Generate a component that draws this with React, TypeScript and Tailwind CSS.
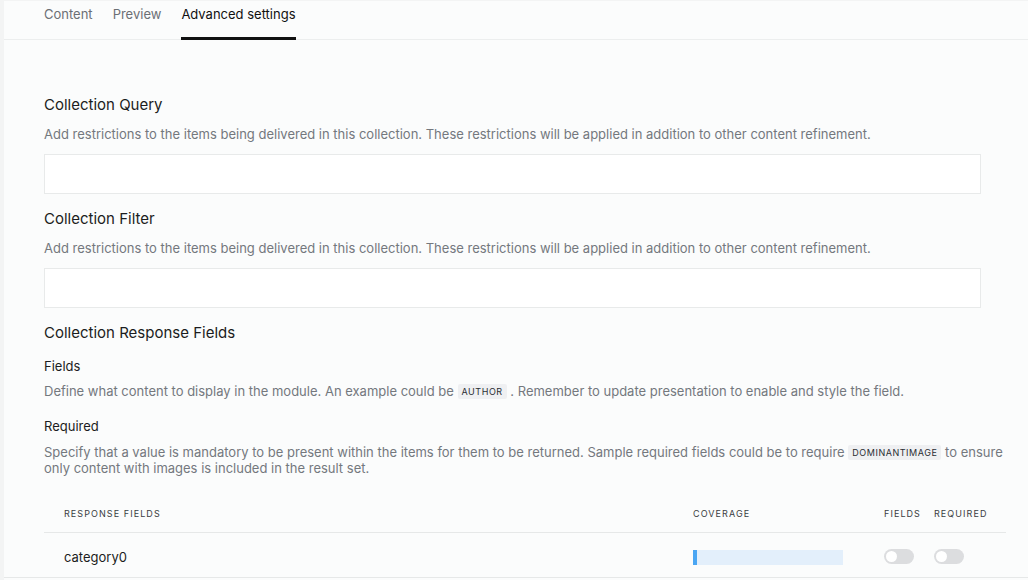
import React from 'react';

const font = { fontFamily: 'Inter, "Noto Sans", sans-serif' };

const Toggle: React.FC = () => (
  <div className="w-[30px] h-[15px] rounded-full bg-[#dcdddf] relative">
    <div className="absolute left-[2px] top-[2px] w-[11px] h-[11px] rounded-full bg-white" />
  </div>
);

const Code: React.FC<{ children: React.ReactNode }> = ({ children }) => (
  <span className="inline-block bg-[#eff0f2] text-[#2a2d33] text-[9px] tracking-[0.06em] px-[4px] py-[1px] rounded-[2px] leading-[13px] align-[1px]">
    {children}
  </span>
);

const App: React.FC = () => {
  return (
    <div className="w-[1028px] h-[580px] bg-[#f3f4f4] pt-px pl-[4px] overflow-hidden" style={font}>
      <div className="h-full bg-[#fbfcfc]">
        <div className="flex gap-[20px] px-[40px] border-b border-[#eceeee] h-[39px]">
          <div className="text-[13px] text-[#6b6f75] pt-[4px]">Content</div>
          <div className="text-[13px] text-[#6b6f75] pt-[4px]">Preview</div>
          <div className="text-[13px] text-[#111] pt-[4px] border-b-[3px] border-[#111] mb-[-1px]">Advanced settings</div>
        </div>

        <div className="pl-[40px] pr-[22px] pt-[55px]">
          <h2 className="text-[15px] text-[#1b1d21] leading-[20px]">Collection Query</h2>
          <p className="text-[13px] text-[#74787e] mt-[10px] leading-[18px]">
            Add restrictions to the items being delivered in this collection. These restrictions will be applied in addition to other content refinement.
          </p>
          <div className="w-[937px] h-[40px] bg-white border border-[#e8eaea] mt-[11px]" />

          <h2 className="text-[15px] text-[#1b1d21] leading-[20px] mt-[15px]">Collection Filter</h2>
          <p className="text-[13px] text-[#74787e] mt-[10px] leading-[18px]">
            Add restrictions to the items being delivered in this collection. These restrictions will be applied in addition to other content refinement.
          </p>
          <div className="w-[937px] h-[40px] bg-white border border-[#e8eaea] mt-[11px]" />

          <h2 className="text-[15px] text-[#1b1d21] leading-[20px] mt-[15px]">Collection Response Fields</h2>
          <h3 className="text-[13px] text-[#1b1d21] mt-[14px] leading-[18px]">Fields</h3>
          <p className="text-[13px] text-[#74787e] mt-[7px] leading-[18px]">
            Define what content to display in the module. An example could be <Code>AUTHOR</Code> . Remember to update presentation to enable and style the field.
          </p>
          <h3 className="text-[13px] text-[#1b1d21] mt-[17px] leading-[18px]">Required</h3>
          <p className="text-[13px] text-[#74787e] mt-[9px] leading-[16px]">
            Specify that a value is mandatory to be present within the items for them to be returned. Sample required fields could be to require <Code>DOMINANTIMAGE</Code> to ensure only content with images is included in the result set.
          </p>

          <div className="mt-[19px]">
            <div className="flex items-center h-[38px] border-b border-[#e6e8e8] text-[9px] tracking-[0.12em] text-[#3a3d42]">
              <div className="pl-[20px] w-[649px]">RESPONSE FIELDS</div>
              <div className="w-[191px]">COVERAGE</div>
              <div className="w-[50px]">FIELDS</div>
              <div>REQUIRED</div>
            </div>
          </div>
        </div>
        <div className="flex items-center h-[45px] border-b border-[#e6e8e8] pl-[40px]">
          <div className="pl-[20px] w-[649px] text-[13px] text-[#1b1d21] pt-[6px]">category0</div>
          <div className="w-[191px] pt-[5px]">
            <div className="w-[150px] h-[15px] bg-[#e3effb]">
              <div className="w-[4px] h-full bg-[#4aa6f3]" />
            </div>
          </div>
          <div className="w-[50px] pt-[2px]"><Toggle /></div>
          <div className="pt-[2px]"><Toggle /></div>
        </div>
      </div>
    </div>
  );
};

export default App;
